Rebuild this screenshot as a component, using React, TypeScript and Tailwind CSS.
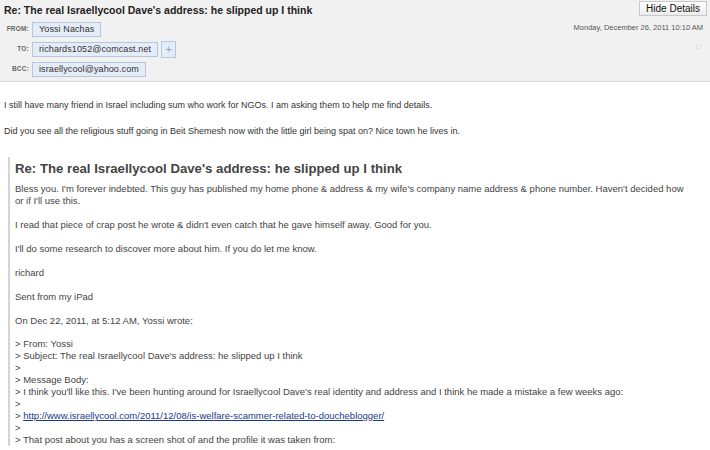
import React from 'react';

const quoteLines: string[] = [
  '> From: Yossi',
  "> Subject: The real Israellycool Dave's address: he slipped up I think",
  '>',
  '> Message Body:',
  "> I think you'll like this. I've been hunting around for Israellycool Dave's real identity and address and I think he made a mistake a few weeks ago:",
  '>',
  'LINK',
  '>',
  '> That post about you has a screen shot of and the profile it was taken from:',
];

const Pill = ({ children }: { children: React.ReactNode }) => (
  <span className="inline-flex items-center h-[15px] px-[6px] bg-[#e4ecf7] border border-[#b5c7de] text-[#333] text-[9px] leading-none tracking-[0.1px]">
    {children}
  </span>
);

const Label = ({ children }: { children: React.ReactNode }) => (
  <span className="w-[29px] text-right text-[6.5px] font-bold text-[#666] tracking-[0.2px] uppercase">{children}</span>
);

export default function App() {
  return (
    <div className="w-[710px] h-[450px] overflow-hidden bg-white text-[#333]" style={{ fontFamily: '"Liberation Sans", Arial, sans-serif' }}>
      {/* header */}
      <div className="h-[82px] bg-[#f1f1f1] border-b border-[#dadada]">
        <div className="flex items-start justify-between pl-[4px] pr-[3px] pt-[1px]">
          <h1 className="pt-[2px] text-[10.5px] font-bold text-[#222]">
            Re: The real Israellycool Dave's address: he slipped up I think
          </h1>
          <button className="h-[15px] px-[6px] bg-gradient-to-b from-white to-[#ececec] border border-[#c8c8c8] text-[10px] leading-none text-[#111]">
            Hide Details
          </button>
        </div>
        <div className="flex justify-between pr-[7px]">
          <div className="flex flex-col gap-[4px] pt-[3px]">
            <div className="flex items-center gap-[3px]">
              <Label>From:</Label>
              <Pill>Yossi Nachas</Pill>
            </div>
            <div className="flex items-center gap-[3px]">
              <Label>To:</Label>
              <Pill>richards1052@comcast.net</Pill>
              <span className="w-[15px] h-[17px] bg-[#e4ecf7] border border-[#b5c7de] text-[#8aa0be] text-[11px] leading-none flex items-center justify-center">+</span>
            </div>
            <div className="flex items-center gap-[3px]">
              <Label>Bcc:</Label>
              <Pill>israellycool@yahoo.com</Pill>
            </div>
          </div>
          <div className="flex flex-col items-end pt-[3px]">
            <span className="text-[7.5px] text-[#555]">Monday, December 26, 2011 10:10 AM</span>
            <span className="mt-[11px] mr-[2px] w-[5px] h-[5px] border border-[#e2e2e2]" />
          </div>
        </div>
      </div>

      {/* body */}
      <div className="pl-[4px] pt-[17px] text-[9px] leading-[12px] text-[#333]">
        <p>I still have many friend in Israel including sum who work for NGOs. I am asking them to help me find details.</p>
        <p className="mt-[14px]">Did you see all the religious stuff going in Beit Shemesh now with the little girl being spat on? Nice town he lives in.</p>

        <div className="mt-[20px] ml-[4px] border-l-2 border-[#d4d4d4] pl-[5px] pt-[3px] text-[9.5px] text-[#444]">
          <h2 className="text-[13.2px] font-bold leading-[18px] text-[#444]">
            Re: The real Israellycool Dave's address: he slipped up I think
          </h2>
          <p className="mt-[5px] w-[674px]">
            Bless you. I'm forever indebted. This guy has published my home phone &amp; address &amp; my wife's company name address &amp; phone number. Haven't decided how or if I'll use this.
          </p>
          <p className="mt-[12px]">I read that piece of crap post he wrote &amp; didn't even catch that he gave himself away. Good for you.</p>
          <p className="mt-[12px]">I'll do some research to discover more about him. If you do let me know.</p>
          <p className="mt-[12px]">richard</p>
          <p className="mt-[12px]">Sent from my iPad</p>
          <p className="mt-[12px]">On Dec 22, 2011, at 5:12 AM, Yossi wrote:</p>
          <div className="mt-[11px]">
            {quoteLines.map((line, i) =>
              line === 'LINK' ? (
                <p key={i}>
                  &gt;{' '}
                  <a className="text-[#1a3a8c] underline">http://www.israellycool.com/2011/12/08/is-welfare-scammer-related-to-doucheblogger/</a>
                </p>
              ) : (
                <p key={i}>{line}</p>
              )
            )}
          </div>
        </div>
      </div>
    </div>
  );
}
